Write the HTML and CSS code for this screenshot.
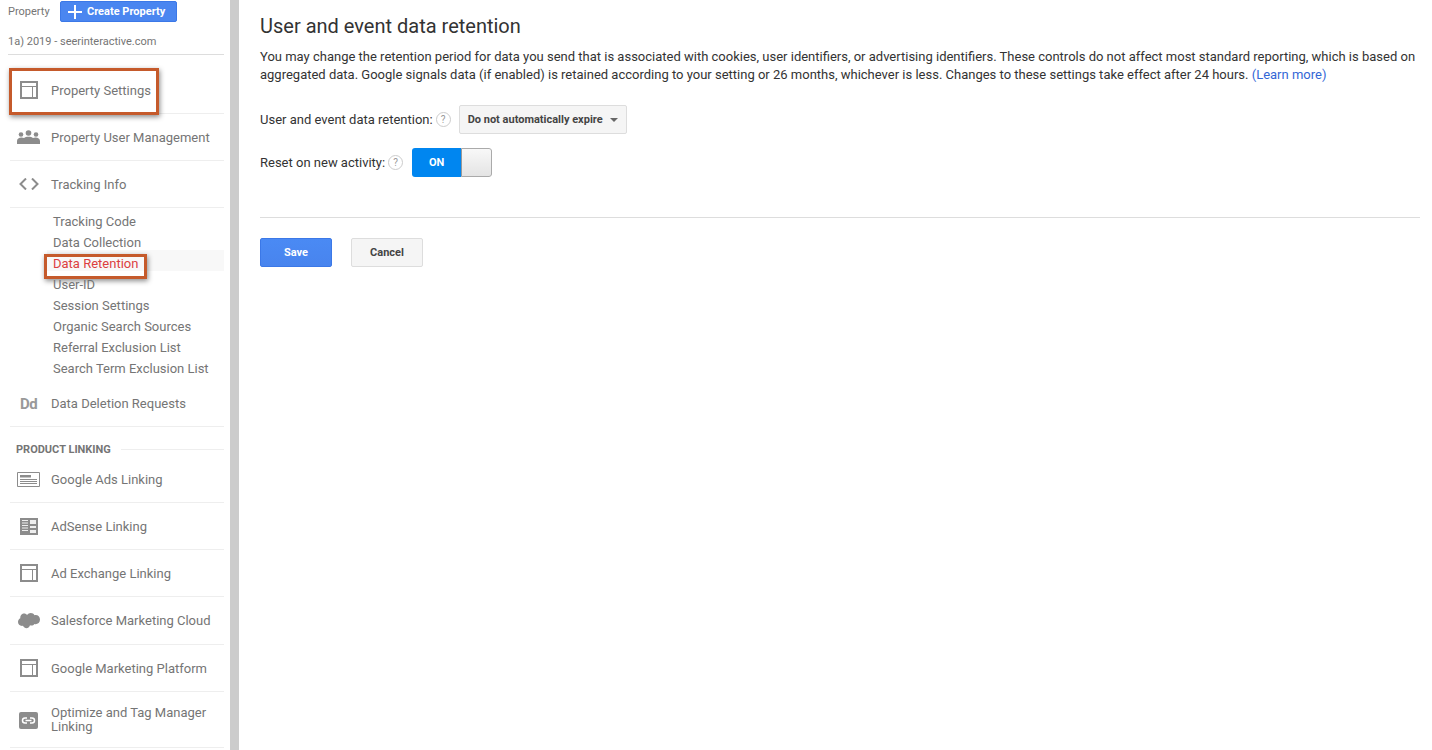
FILE: index.html
```html
<!DOCTYPE html>
<html lang="en">
<head>
<meta charset="utf-8">
<title>User and event data retention</title>
<link rel="stylesheet" href="styles.css">
</head>
<body>
<div class="page">
  <aside class="sidebar">
    <div class="prop-head">
      <span class="prop-label">Property</span>
      <button class="create-btn"><svg class="plus" width="14" height="14" viewBox="0 0 14 14"><path d="M6 0h2v6h6v2H8v6H6V8H0V6h6z" fill="#fff"/></svg>Create Property</button>
    </div>
    <div class="prop-name">1a) 2019 - seerinteractive.com</div>

    <nav class="nav">
      <div class="item item-first">
        <span class="ic"><svg width="18" height="18" viewBox="0 0 18 18"><path d="M0 0h18v18H0zM2 2v3h14V2zM2 6v10h10V6zM13 6v10h3V6z" fill="#8c8c8c" fill-rule="evenodd"/></svg></span>
        <span class="lbl">Property Settings</span>
        <span class="callout callout-main"></span>
      </div>
      <div class="item">
        <span class="ic"><svg width="23" height="14" viewBox="0 0 23 14"><g fill="#8c8c8c"><circle cx="4" cy="4.5" r="2.3"/><circle cx="11.5" cy="3" r="2.8"/><circle cx="19" cy="4.5" r="2.3"/><path d="M0 14v-3c0-2 2-3.500 4.500-3.500 1 0 1.800.2 2.500.5C8 7 9.500 6.700 11.500 6.700S15 7 16 8c.7-.3 1.500-.5 2.500-.5C21 7.500 23 9 23 11v3z"/></g></svg></span>
        <span class="lbl">Property User Management</span>
      </div>
      <div class="item">
        <span class="ic"><svg width="20" height="12" viewBox="0 0 20 12"><path d="M7 .5 1.500 6 7 11.500M13 .5 18.500 6 13 11.500" fill="none" stroke="#8c8c8c" stroke-width="2"/></svg></span>
        <span class="lbl">Tracking Info</span>
      </div>

      <ul class="sub">
        <li class="sub-row">Tracking Code</li>
        <li class="sub-row">Data Collection</li>
        <li class="sub-row sub-active">Data Retention<span class="callout callout-sub"></span></li>
        <li class="sub-row">User-ID</li>
        <li class="sub-row">Session Settings</li>
        <li class="sub-row">Organic Search Sources</li>
        <li class="sub-row">Referral Exclusion List</li>
        <li class="sub-row">Search Term Exclusion List</li>
      </ul>

      <div class="item">
        <span class="ic ic-dd">Dd</span>
        <span class="lbl">Data Deletion Requests</span>
      </div>

      <div class="section-head"><span>PRODUCT LINKING</span><i class="section-line"></i></div>

      <div class="item">
        <span class="ic"><svg width="23" height="15" viewBox="0 0 23 15"><path d="M.5.5h22v14H.5z" fill="#fff" stroke="#8c8c8c"/><path d="M3 3h11v2.500H3zM3 7h17v1H3zM3 9h17v1H3zM3 11h17v1H3z" fill="#8c8c8c"/></svg></span>
        <span class="lbl">Google Ads Linking</span>
      </div>
      <div class="item">
        <span class="ic"><svg width="18" height="17" viewBox="0 0 18 17"><path d="M0 0h18v17H0z" fill="#8c8c8c"/><path d="M2 2h6v1H2zM2 4.500h6v1H2zM2 7h6v1H2zM2 9.500h6v1H2zM2 12h6v1H2zM10 2h6v4h-6zM10 8h6v2h-6zM10 12h6v3h-6z" fill="#fff" fill-opacity=".85"/></svg></span>
        <span class="lbl">AdSense Linking</span>
      </div>
      <div class="item">
        <span class="ic"><svg width="18" height="18" viewBox="0 0 18 18"><path d="M0 0h18v18H0zM2 2v3h14V2zM2 6v10h10V6zM13 6v10h3V6z" fill="#8c8c8c" fill-rule="evenodd"/></svg></span>
        <span class="lbl">Ad Exchange Linking</span>
      </div>
      <div class="item item-tall">
        <span class="ic"><svg width="22" height="16" viewBox="0 0 22 16"><path d="M9 2c1-1.300 2.300-2 3.800-2 1.700 0 3 .8 3.700 2.200 3-.7 5.500 1.300 5.500 4.300 0 3.300-2.900 5.300-5.700 4.500-.8 1.400-2.800 2-4.300 1.200C11.200 14.800 8.500 16 6.500 14.500 5.800 14 5.300 13.500 5 12.800 2 13.300 0 11.500 0 9c0-1.800 1-3.200 2.300-3.800C2 2.500 4 .5 6.300 .5 7.300.5 8.300 1 9 2z" fill="#8c8c8c"/></svg></span>
        <span class="lbl">Salesforce Marketing Cloud</span>
      </div>
      <div class="item">
        <span class="ic"><svg width="18" height="18" viewBox="0 0 18 18"><path d="M0 0h18v18H0zM2 2v3h14V2zM2 6v10h10V6zM13 6v10h3V6z" fill="#8c8c8c" fill-rule="evenodd"/></svg></span>
        <span class="lbl">Google Marketing Platform</span>
      </div>
      <div class="item item-two">
        <span class="ic"><svg width="19" height="17" viewBox="0 0 19 17"><rect width="19" height="17" rx="2" fill="#8c8c8c"/><path d="M8 6H6a2.500 2.500 0 0 0 0 5h2M11 6h2a2.500 2.500 0 0 1 0 5h-2M6.500 8.500h6" fill="none" stroke="#fff" stroke-width="1.500"/></svg></span>
        <span class="lbl">Optimize and Tag Manager Linking</span>
      </div>
    </nav>
  </aside>

  <main class="main">
    <h1 class="title">User and event data retention</h1>
    <p class="desc">You may change the retention period for data you send that is associated with cookies, user identifiers, or advertising identifiers. These controls do not affect most standard reporting, which is based on aggregated data. Google signals data (if enabled) is retained according to your setting or 26 months, whichever is less. Changes to these settings take effect after 24 hours. <a class="link" href="#">(Learn more)</a></p>

    <div class="field field-retention">
      <span class="field-label">User and event data retention:</span>
      <span class="help">?</span>
      <button class="select">Do not automatically expire<i class="caret"></i></button>
    </div>
    <div class="field field-reset">
      <span class="field-label">Reset on new activity:</span>
      <span class="help">?</span>
      <div class="toggle"><span class="toggle-on">ON</span><span class="toggle-knob"></span></div>
    </div>

    <hr class="rule">

    <div class="actions">
      <button class="btn btn-save">Save</button>
      <button class="btn btn-cancel">Cancel</button>
    </div>
  </main>
</div>
</body>
</html>
```
FILE: styles.css
```css
* { box-sizing: border-box; }
html, body { margin: 0; padding: 0; height: 100%; overflow: hidden; background: #fff; }
body { font-family: Roboto, "Liberation Sans", sans-serif; font-size: 13px; color: #333; }
button { font-family: inherit; cursor: pointer; }

.page { display: flex; height: 750px; }

.sidebar {
  width: 239px;
  flex: none;
  padding: 1px 6px 0 8px;
  border-right: 9px solid #ccc;
  color: #757575;
  overflow: hidden;
}

.prop-head { display: flex; align-items: center; height: 21px; }
.prop-label { font-size: 11px; width: 52px; }
.create-btn {
  display: flex;
  align-items: center;
  width: 117px;
  height: 21px;
  padding: 0 0 0 7px;
  background: #4a86f0;
  border: 1px solid #3b78e7;
  border-radius: 2px;
  color: #fff;
  font-size: 11px;
  font-weight: 700;
}
.plus { margin-right: 5px; }

.prop-name {
  height: 33px;
  padding-top: 13px;
  font-size: 11px;
  line-height: 14px;
  border-bottom: 1px solid #ddd;
}

.nav { padding-top: 12px; margin-left: 2px; }

.item {
  position: relative;
  display: flex;
  align-items: center;
  height: 47px;
  border-bottom: 1px solid #eee;
}
.item-tall { height: 48px; }
.item-two { height: 56px; padding-top: 1px; line-height: 14px; }
.ic { width: 41px; flex: none; display: flex; justify-content: center; padding-right: 4px; }
.ic-dd { padding-top: 1px; font-size: 15px; font-weight: 700; color: #999; letter-spacing: -.5px; }
.lbl { flex: 1; }

.callout {
  position: absolute;
  border: 3px solid #c55a2b;
  box-shadow: 1px 2px 5px rgba(0, 0, 0, .45);
  pointer-events: none;
}
.callout-main { left: -1px; top: 1px; width: 150px; height: 47px; }
.callout-sub { left: -3px; top: 4px; width: 103px; height: 25px; }

.sub { list-style: none; margin: 0; padding: 0 0 4px; }
.sub-row {
  position: relative;
  height: 21px;
  padding: 3px 0 0 6px;
  line-height: 21px;
  margin-left: 37px;
}
.sub-active { background: #f8f8f8; color: #dc3f3f; }

.section-head {
  display: flex;
  align-items: center;
  height: 29px;
  padding: 15px 0 0 6px;
  font-size: 11px;
  font-weight: 700;
  color: #757575;
}
.section-line { flex: 1; height: 1px; background: #eee; margin-left: 10px; }

.main { flex: 1; padding: 14px 12px 0 21px; min-width: 0; }
.title { margin: 0; font-size: 20px; font-weight: 400; line-height: 24px; color: #333; }
.desc { margin: 10px 0 0; line-height: 18px; color: #333; }
.link { color: #3367d6; text-decoration: none; }

.field { display: flex; align-items: center; }
.field-retention { margin-top: 21px; height: 29px; }
.field-reset { margin-top: 14px; height: 29px; }
.field-label { color: #333; }
.help {
  width: 15px;
  height: 15px;
  margin-left: 3px;
  border: 1px solid #ccc;
  border-radius: 50%;
  font-size: 10px;
  line-height: 13px;
  text-align: center;
  color: #999;
}
.field-retention .select { margin-left: 8px; }
.select {
  display: flex;
  align-items: center;
  width: 168px;
  height: 29px;
  padding: 0 0 0 8px;
  background: #f5f5f5;
  border: 1px solid #ddd;
  border-radius: 2px;
  font-size: 11px;
  font-weight: 700;
  color: #444;
}
.caret { margin-left: 7px; border: 4px solid transparent; border-top-color: #666; border-bottom: 0; }

.toggle {
  display: flex;
  width: 80px;
  height: 29px;
  margin-left: 9px;
  border-radius: 3px;
  overflow: hidden;
}
.toggle-on {
  width: 49px;
  background: #0086f0;
  color: #fff;
  font-size: 11px;
  font-weight: 700;
  line-height: 29px;
  text-align: center;
}
.toggle-knob {
  flex: 1;
  background: linear-gradient(#f8f8f8, #e4e4e4);
  border: 1px solid #aaa;
  border-left: 1px solid #999;
  border-radius: 0 3px 3px 0;
}

.rule { margin: 40px 0 0; border: 0; border-top: 1px solid #ddd; }

.actions { display: flex; gap: 19px; margin-top: 20px; }
.btn {
  width: 72px;
  height: 29px;
  padding: 0;
  border-radius: 2px;
  font-size: 11px;
  font-weight: 700;
}
.btn-save { background: linear-gradient(#4a8af4, #4884ee); border: 1px solid #3b78e7; color: #fff; }
.btn-cancel { background: #f5f5f5; border: 1px solid #ddd; color: #444; }
```
